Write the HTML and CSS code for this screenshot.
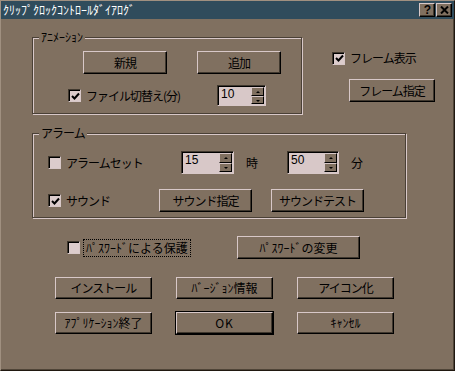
FILE: index.html
```html
<!DOCTYPE html>
<html lang="ja">
<head>
    <meta charset="UTF-8">
    <title>クリップクロックコントロールダイアログ</title>
    <link rel="stylesheet" href="styles.css">
</head>
<body>
    <div class="dialog">
        <div class="titlebar">
            <span class="title">ｸﾘｯﾌﾟｸﾛｯｸｺﾝﾄﾛｰﾙﾀﾞｲｱﾛｸﾞ</span>
            <div class="title-btns">
                <span class="tbtn">?</span>
                <span class="tbtn">
                    <svg width="9" height="8" viewBox="0 0 9 8"><path d="M1 0.5 L8 7.5 M8 0.5 L1 7.5" stroke="#000" stroke-width="2"/></svg>
                </span>
            </div>
        </div>

        <div class="content">
            <div class="top">
                <div class="group anim">
                    <span class="group-label half">ｱﾆﾒｰｼｮﾝ</span>
                    <div class="anim-btns">
                        <button class="btn w84">新規</button>
                        <button class="btn w84">追加</button>
                    </div>
                    <div class="row anim-file">
                        <label class="check w149"><span class="box checked"><svg width="9" height="9" viewBox="0 0 9 9"><path d="M1 4 L3.5 6.5 L8 1.5" fill="none" stroke="#000" stroke-width="2"/></svg></span>ファイル切替え(分)</label>
                        <div class="spin w49">
                            <span class="spin-field">10</span>
                            <span class="spin-arrows"><span class="arrow up"></span><span class="arrow down"></span></span>
                        </div>
                    </div>
                </div>

                <div class="frame-col">
                    <label class="check"><span class="box checked"><svg width="9" height="9" viewBox="0 0 9 9"><path d="M1 4 L3.5 6.5 L8 1.5" fill="none" stroke="#000" stroke-width="2"/></svg></span>フレーム表示</label>
                    <button class="btn frame-btn">フレーム指定</button>
                </div>
            </div>

            <div class="group alarm">
                <span class="group-label">アラーム</span>
                <div class="row">
                    <label class="check w133"><span class="box"></span>アラームセット</label>
                    <div class="spin w53">
                        <span class="spin-field">15</span>
                        <span class="spin-arrows"><span class="arrow up"></span><span class="arrow down"></span></span>
                    </div>
                    <span class="unit">時</span>
                    <div class="spin w52">
                        <span class="spin-field">50</span>
                        <span class="spin-arrows"><span class="arrow up"></span><span class="arrow down"></span></span>
                    </div>
                    <span class="unit">分</span>
                </div>
                <div class="row sound-row">
                    <label class="check w111"><span class="box checked"><svg width="9" height="9" viewBox="0 0 9 9"><path d="M1 4 L3.5 6.5 L8 1.5" fill="none" stroke="#000" stroke-width="2"/></svg></span>サウンド</label>
                    <button class="btn w93">サウンド指定</button>
                    <button class="btn w93 gap19">サウンドテスト</button>
                </div>
            </div>

            <div class="row password-row">
                <label class="check w170"><span class="box"></span><span class="focus half">ﾊﾟｽﾜｰﾄﾞによる保護</span></label>
                <button class="btn pw-btn half">ﾊﾟｽﾜｰﾄﾞの変更</button>
            </div>

            <div class="btn-grid">
                <button class="btn">インストール</button>
                <button class="btn half">ﾊﾞｰｼﾞｮﾝ情報</button>
                <button class="btn">アイコン化</button>
                <button class="btn half">ｱﾌﾟﾘｹｰｼｮﾝ終了</button>
                <button class="btn default">OK</button>
                <button class="btn half">ｷｬﾝｾﾙ</button>
            </div>
        </div>
    </div>
</body>
</html>
```

FILE: styles.css
```css
body {
    margin: 0;
    background-color: #807060;
    font-family: "Noto Sans CJK JP", "Noto Sans", sans-serif;
    font-size: 12px;
    line-height: 14px;
    color: #000;
    letter-spacing: -1px;
}
.half {
    letter-spacing: 0;
}
.dialog {
    width: 455px;
    height: 371px;
    box-sizing: border-box;
    border: 1px solid;
    border-color: #a09080 #201810 #201810 #a09080;
    box-shadow: inset -1px -1px 0 #504538;
}
.titlebar {
    height: 18px;
    background-color: #304c5c;
    color: #fff;
    display: flex;
    align-items: center;
    justify-content: space-between;
    padding: 0 2px;
}
.title {
    letter-spacing: 0;
}
.title-btns {
    display: flex;
    gap: 1px;
}
.tbtn {
    box-sizing: border-box;
    width: 16px;
    height: 14px;
    display: flex;
    align-items: center;
    justify-content: center;
    background-color: #807060;
    color: #000;
    font-weight: bold;
    font-family: "Liberation Sans", sans-serif;
    font-size: 12px;
    border: 1px solid;
    border-color: #d8c8c8 #000 #000 #d8c8c8;
    box-shadow: inset -1px -1px 0 #40382e;
}
.content {
    padding: 18px 0 0 31px;
}
.top {
    display: flex;
    align-items: flex-start;
}
/* etched group frame */
.group {
    position: relative;
    box-sizing: border-box;
    border: 1px solid #4a4036;
    box-shadow: inset 1px 1px 0 #d8c8c8, 1px 1px 0 #d8c8c8;
}
.group-label {
    position: absolute;
    top: -8px;
    left: 6px;
    padding: 0 2px;
    background-color: #807060;
}
.anim {
    width: 270px;
    height: 77px;
    padding: 13px 0 0 35px;
}
.anim-btns {
    display: flex;
    gap: 30px;
    margin-left: 15px;
}
.row {
    display: flex;
    align-items: center;
}
.anim-file {
    margin-top: 11px;
}
.frame-col {
    margin-left: 30px;
    padding-top: 14px;
    display: flex;
    flex-direction: column;
    align-items: flex-start;
}
.frame-btn {
    width: 86px;
    margin: 14px 0 0 17px;
}
.alarm {
    width: 374px;
    height: 85px;
    margin-top: 19px;
    padding: 17px 0 0 15px;
}
.sound-row {
    margin-top: 15px;
}
.unit {
    margin: 0 30px 0 12px;
}
.gap19 {
    margin-left: 19px;
}
.password-row {
    margin: 18px 0 0 35px;
}
.pw-btn {
    width: 123px;
    height: 24px;
}
.focus {
    border: 1px dotted #000;
    padding: 1px 2px;
    margin-left: -2px;
}
.btn-grid {
    display: grid;
    grid-template-columns: repeat(3, 97px);
    grid-auto-rows: 22px;
    column-gap: 24px;
    row-gap: 13px;
    margin: 18px 0 0 23px;
}

/* controls */
.btn {
    box-sizing: border-box;
    height: 23px;
    padding: 0;
    background-color: #807060;
    border: 1px solid;
    border-color: #d8c8c8 #000 #000 #d8c8c8;
    box-shadow: inset -1px -1px 0 #40382e;
    font: inherit;
    color: #000;
    letter-spacing: inherit;
}
.btn-grid .btn {
    height: 22px;
}
.btn.half {
    letter-spacing: 0;
}
.btn.default {
    outline: 1px solid #000;
    letter-spacing: 1px;
}
.w84 { width: 84px; }
.w93 { width: 93px; }
.w49 { width: 49px; }
.w52 { width: 52px; }
.w53 { width: 53px; }
.w111 { width: 111px; }
.w133 { width: 133px; }
.w149 { width: 149px; }
.w170 { width: 170px; }

.check {
    display: flex;
    align-items: center;
    flex-shrink: 0;
}
.box {
    box-sizing: border-box;
    width: 13px;
    height: 13px;
    flex-shrink: 0;
    margin-right: 5px;
    display: flex;
    align-items: center;
    justify-content: center;
    background-color: #dccccc;
    border: 1px solid;
    border-color: #40382e #d8c8c8 #d8c8c8 #40382e;
    box-shadow: inset 1px 1px 0 #000;
}
.box svg {
    margin: 1px 0 0 1px;
}
.spin {
    box-sizing: border-box;
    height: 21px;
    display: flex;
    background-color: #d8c8c8;
    border: 1px solid;
    border-color: #40382e #d8c8c8 #d8c8c8 #40382e;
    box-shadow: inset 1px 1px 0 #000;
}
.alarm .spin {
    height: 23px;
}
.spin-field {
    flex: 1;
    padding: 1px 0 0 3px;
    letter-spacing: 0;
    font-family: "Liberation Sans", sans-serif;
}
.spin-arrows {
    width: 13px;
    display: flex;
    flex-direction: column;
    padding: 1px 1px 1px 0;
}
.arrow {
    flex: 1;
    position: relative;
    background-color: #807060;
    border: 1px solid;
    border-color: #d8c8c8 #000 #000 #d8c8c8;
}
.arrow::after {
    content: "";
    position: absolute;
    left: 4px;
    top: 3px;
    border-left: 2px solid transparent;
    border-right: 2px solid transparent;
}
.arrow.up::after {
    border-bottom: 2px solid #000;
}
.arrow.down::after {
    border-top: 2px solid #000;
}
```
